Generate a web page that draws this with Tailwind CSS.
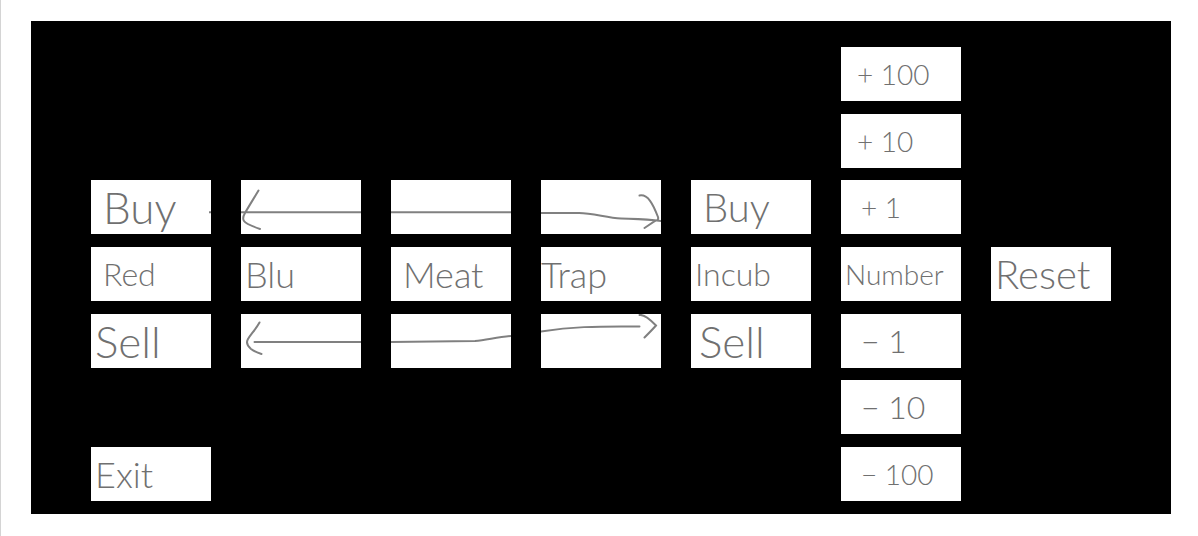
<!DOCTYPE html>
<html lang="en">
<head>
<meta charset="utf-8">
<meta name="viewport" content="width=device-width, initial-scale=1">
<title>Shop menu sketch</title>
<script src="https://cdn.jsdelivr.net/npm/@tailwindcss/browser@4"></script>
</head>
<body class="bg-white">
<main class="min-h-screen border-l border-[#d4d4d4] pt-[21px] pr-[27px] pb-[22px] pl-[30px]">
  <div class="grid h-[493px] grid-cols-7 content-between gap-x-[30px] bg-black px-[60px] pt-[26px] pb-[13px] font-['Lato','Open_Sans',sans-serif] font-light leading-none text-[#707070]">

    <button class="col-start-6 row-start-1 h-[54px] bg-white pl-4 text-left text-[28px]">+ 100</button>
    <button class="col-start-6 row-start-2 h-[54px] bg-white pl-4 text-left text-[28px]">+ 10</button>

    <button class="relative col-start-1 row-start-3 h-[54px] bg-white pl-3 text-left text-[44px]">Buy
      <svg class="absolute inset-0 size-full" viewBox="0 0 120 54" fill="none" stroke="#808080" stroke-width="2" aria-hidden="true"><path d="M118 32.300H120"/></svg>
    </button>
    <div class="col-start-2 row-start-3 h-[54px] bg-white">
      <svg class="size-full" viewBox="0 0 120 54" preserveAspectRatio="none" fill="none" stroke="#808080" stroke-width="2" stroke-linecap="round" role="img" aria-label="Left arrow"><path d="M17.500 10.500C13 18 8 26 4 33Q1 38 3 41Q5 44 19 49M0 32.300H120"/></svg>
    </div>
    <div class="col-start-3 row-start-3 h-[54px] bg-white">
      <svg class="size-full" viewBox="0 0 120 54" preserveAspectRatio="none" fill="none" stroke="#808080" stroke-width="2" aria-hidden="true"><path d="M0 32.300H120"/></svg>
    </div>
    <div class="col-start-4 row-start-3 h-[54px] bg-white">
      <svg class="size-full" viewBox="0 0 120 54" preserveAspectRatio="none" fill="none" stroke="#808080" stroke-width="2" stroke-linecap="round" role="img" aria-label="Right arrow"><path d="M0 33H38C52 33 66 38 80 38.500C94 39 106 39 120 41M98.500 15.500C107 14 112 24 117 37Q118 40 114 41L103.500 48"/></svg>
    </div>
    <button class="col-start-5 row-start-3 h-[54px] bg-white pl-3 text-left text-[40px]">Buy</button>
    <button class="col-start-6 row-start-3 h-[54px] bg-white pl-5 text-left text-[28px]">+ 1</button>

    <button class="col-start-1 row-start-4 h-[54px] bg-white pl-3 text-left text-[32px]">Red</button>
    <button class="col-start-2 row-start-4 h-[54px] bg-white pl-1 text-left text-[36px]">Blu</button>
    <button class="col-start-3 row-start-4 h-[54px] bg-white pl-3 text-left text-[36px]">Meat</button>
    <button class="col-start-4 row-start-4 h-[54px] bg-white text-left text-[36px]">Trap</button>
    <button class="col-start-5 row-start-4 h-[54px] bg-white pl-1 text-left text-[32px]">Incub</button>
    <output class="col-start-6 row-start-4 flex h-[54px] items-center bg-white pl-1 text-[28px]">Number</output>
    <button class="col-start-7 row-start-4 h-[54px] bg-white pl-1 text-left text-[40px]">Reset</button>

    <button class="col-start-1 row-start-5 h-[54px] bg-white pl-1 text-left text-[44px]">Sell</button>
    <div class="col-start-2 row-start-5 h-[54px] bg-white">
      <svg class="size-full" viewBox="0 0 120 54" preserveAspectRatio="none" fill="none" stroke="#808080" stroke-width="2" stroke-linecap="round" role="img" aria-label="Left arrow"><path d="M18.500 8.500C15 15 10 20 7 25Q4 30 10 35Q14 38 20.500 40M13.500 28H120"/></svg>
    </div>
    <div class="col-start-3 row-start-5 h-[54px] bg-white">
      <svg class="size-full" viewBox="0 0 120 54" preserveAspectRatio="none" fill="none" stroke="#808080" stroke-width="2" aria-hidden="true"><path d="M0 28L84 27C96 26 106 23 120 22"/></svg>
    </div>
    <div class="col-start-4 row-start-5 h-[54px] bg-white">
      <svg class="size-full" viewBox="0 0 120 54" preserveAspectRatio="none" fill="none" stroke="#808080" stroke-width="2" stroke-linecap="round" role="img" aria-label="Right arrow"><path d="M0 17.500C30 13 52 12 98.500 12.500M98.500 1Q104 0 115 11.500Q112 15 103.500 23.500"/></svg>
    </div>
    <button class="col-start-5 row-start-5 h-[54px] bg-white pl-2 text-left text-[44px]">Sell</button>
    <button class="col-start-6 row-start-5 h-[54px] bg-white pl-5 text-left text-[32px]">&minus; 1</button>

    <button class="col-start-6 row-start-6 h-[54px] bg-white pl-5 text-left text-[32px]">&minus; 10</button>

    <button class="col-start-1 row-start-7 h-[54px] bg-white pl-1 text-left text-[36px]">Exit</button>
    <button class="col-start-6 row-start-7 h-[54px] bg-white pl-5 text-left text-[28px]">&minus; 100</button>
  </div>
</main>
</body>
</html>
